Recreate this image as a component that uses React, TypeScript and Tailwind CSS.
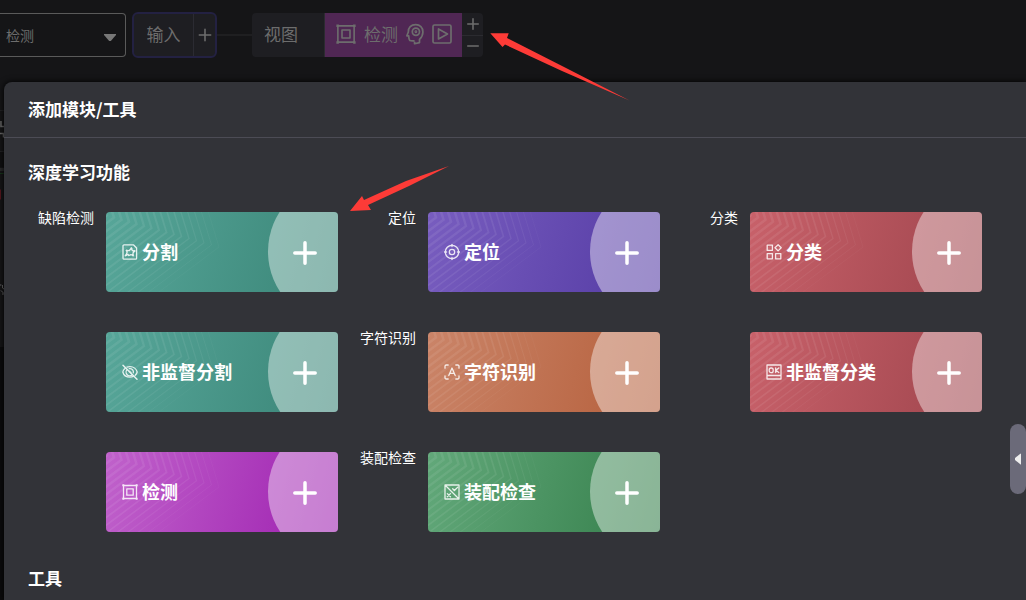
import type { ReactNode } from 'react';

type Module = { label?: string; name: string; tone: string; icon: ReactNode };

const TEAL = 'bg-linear-[105deg] from-[#57a699] to-[#3a8577]';
const VIOLET = 'bg-linear-[105deg] from-[#785dbf] to-[#543ba4]';
const RED = 'bg-linear-[105deg] from-[#c8616a] to-[#9f454d]';
const ORANGE = 'bg-linear-[105deg] from-[#ca8468] to-[#b55f3b]';
const MAGENTA = 'bg-linear-[105deg] from-[#c062cb] to-[#9e20b0]';
const GREEN = 'bg-linear-[105deg] from-[#62a87a] to-[#357f4b]';

function Glyph({ children, className = 'size-4' }: { children: ReactNode; className?: string }) {
  return (
    <svg
      viewBox="0 0 16 16"
      className={className}
      fill="none"
      stroke="currentColor"
      strokeWidth="1.3"
      strokeLinecap="round"
      strokeLinejoin="round"
      aria-hidden="true"
    >
      {children}
    </svg>
  );
}

const frameIcon = (
  <>
    <path d="M1.500 1.500h13v13h-13z" />
    <path d="M4.800 4.800h6.400v6.400H4.800z" />
    <path d="M.3.300h2v2H.3zM13.700.3h2v2h-2zM.3 13.700h2v2H.3zM13.700 13.700h2v2h-2z" fill="currentColor" stroke="none" />
  </>
);

const segmentIcon = (
  <>
    <path d="M2 .8h9.400l3.200 3.200v10.200a1 1 0 0 1-1 1H2a1 1 0 0 1-1-1V1.800a1 1 0 0 1 1-1z" />
    <path d="M4.200 10.800l.9-2.600-.5-1.700 2.500.2L9.400 4.200l.8 2.200 2.200.9-1.400 1.700.1 2.300-2.200-.7-2.300 1-.5-1.300z" />
    <path d="M3.600 11.500l1.400-.9M12.800 6.900l-1.200.4M4.500 6.400l.6.3M9.400 4l.2.8M11 11.600l-.2-.7" strokeWidth="1.700" />
  </>
);

const targetIcon = (
  <>
    <circle cx="8" cy="8" r="6.700" />
    <circle cx="8" cy="8" r="2.700" />
    <path d="M8 .4v2.200M8 13.400v2.200M.4 8h2.200M13.400 8h2.200" />
  </>
);

const classifyIcon = (
  <path d="M1.200 1.200h5.200v5.200H1.200zM1.200 9.600h5.200v5.200H1.200zM9.600 9.600h5.200v5.200H9.600zM12.100.7l3.100 3.100-3.100 3.100L9 3.800z" />
);

const eyeOffIcon = (
  <>
    <path d="M3.200 4.200C1.800 5.300 1 6.800.8 8c.8 3 3.700 5.200 7.200 5.200 1.300 0 2.500-.3 3.500-.9M5 3.200A8 8 0 0 1 8 2.600c3.600 0 6.500 2.400 7.200 5.400-.3 1.200-1 2.300-2 3.200" />
    <path d="M5.200 5.600a3.600 3.600 0 0 0 5 5.200M7.200 4.700a3.400 3.400 0 0 1 4.100 4.200M7.300 7.100l1.800 1.900" />
    <path d="M1 1.200l14 14" strokeWidth="1.500" />
  </>
);

const characterIcon = (
  <>
    <path d="M1 4.200V2.200A1.200 1.200 0 0 1 2.200 1h2M11.800 1h2A1.200 1.200 0 0 1 15 2.200v2M15 11.800v2a1.200 1.200 0 0 1-1.200 1.200h-2M4.200 15h-2A1.200 1.200 0 0 1 1 13.800v-2" />
    <path d="M4.800 11.600 8 4l3.200 7.600M5.900 9.300h4.200" />
  </>
);

const okIcon = (
  <>
    <path d="M1 1h14v14H1zM1 11.500h14" />
    <rect x="3.200" y="4" width="4" height="4.600" rx="1.900" />
    <path d="M9.700 3.900v4.700M12.800 3.900 9.900 6.300l2.900 2.300" />
  </>
);

const assemblyIcon = (
  <>
    <path d="M1 1h14v14H1zM1 1l14 14" />
    <path d="M8.700 4.800l1.700 1.700 3.400-3.400M3.300 9.600l3.200 3.200M6.500 9.600l-3.200 3.200" />
  </>
);

const modules: Module[] = [
  { label: '缺陷检测', name: '分割', tone: TEAL, icon: segmentIcon },
  { label: '定位', name: '定位', tone: VIOLET, icon: targetIcon },
  { label: '分类', name: '分类', tone: RED, icon: classifyIcon },
  { name: '非监督分割', tone: TEAL, icon: eyeOffIcon },
  { label: '字符识别', name: '字符识别', tone: ORANGE, icon: characterIcon },
  { name: '非监督分类', tone: RED, icon: okIcon },
  { name: '检测', tone: MAGENTA, icon: frameIcon },
  { label: '装配检查', name: '装配检查', tone: GREEN, icon: assemblyIcon },
];

const ripples = Array.from({ length: 19 }, (_, i) => {
  const x = 113 - i * 7.5;
  const y = 35 - i * 2.1;
  return {
    points: `${x - 11},${y - 36} ${x},${y} ${x - 140},${y + 105}`,
    width: Math.min(2.6, 0.8 + i * 0.16),
    opacity: Math.min(0.075, 0.045 + i * 0.006),
  };
});

function CardArt() {
  return (
    <svg viewBox="0 0 232 80" className="absolute inset-0 size-full" fill="none" aria-hidden="true">
      {ripples.map((r) => (
        <polyline key={r.points} points={r.points} stroke="#fff" strokeWidth={r.width} strokeOpacity={r.opacity} />
      ))}
      <circle cx="235" cy="39.500" r="73" fill="#fff" fillOpacity=".42" />
      <path d="M199 30.800v20.400M188.800 41h20.400" stroke="#fff" strokeWidth="3.500" strokeLinecap="round" />
    </svg>
  );
}

function ModuleCell({ label, name, tone, icon }: Module) {
  return (
    <div className="flex items-start">
      <span className="flex-1 pr-3 text-right text-sm leading-2.5">{label}</span>
      <button
        type="button"
        className={`relative flex h-20 w-[232px] items-center overflow-hidden rounded-sm pl-4 text-left ${tone}`}
      >
        <CardArt />
        <span className="relative flex items-center gap-1">
          <Glyph className="size-4 opacity-85">{icon}</Glyph>
          <span className="pb-0.5 text-lg leading-6 font-bold">{name}</span>
        </span>
      </button>
    </div>
  );
}

function TopBar() {
  return (
    <header className="flex h-[82px] items-start bg-[#151517] pt-3 text-[17px] text-[#6d6d6d]">
      <div className="relative mt-px mr-1.5">
        <select
          aria-label="模块"
          className="h-11 w-[126px] appearance-none rounded-r-sm border border-l-0 border-[#5a5a5a] bg-transparent pl-1.5 text-sm"
        >
          <option>检测</option>
        </select>
        <svg viewBox="0 0 12 7" className="pointer-events-none absolute top-[21px] right-2.5 w-3" fill="#777" aria-hidden="true">
          <path d="M0 0h12v1L6.800 7H5.200L0 1z" />
        </svg>
      </div>
      <div className="flex h-[46px] overflow-hidden rounded-md border-2 border-[#232142] bg-[#1e1e22]">
        <button type="button" className="w-[60px] border-r border-[#2b2b32] pb-0.5">输入</button>
        <button type="button" aria-label="添加输入" className="flex w-[21px] items-center justify-center">
          <Glyph className="size-3.5"><path d="M8 1.500v13M1.500 8h13" strokeWidth="1.800" /></Glyph>
        </button>
      </div>
      <div className="mt-[22px] h-0.5 w-[35px] bg-[#1f1f21]" />
      <div className="mt-px flex h-11 overflow-hidden rounded-sm bg-[#1e1e22]">
        <button type="button" className="w-[73px] border-r border-[#2b2b30] pb-0.5 pl-3 text-left">视图</button>
        <button type="button" className="flex w-[137px] items-center gap-2 bg-[#502754] pb-0.5 pl-[11px]">
          <Glyph className="size-5">{frameIcon}</Glyph>
          <span>检测</span>
          <svg viewBox="0 0 20 24" className="h-[22px] w-[18px]" fill="none" stroke="currentColor" strokeWidth="1.900" strokeLinejoin="round" aria-hidden="true">
            <path d="M9.500 20.500v2.300l5.500-1.300v-3.500c2-2 3.800-4.500 3.800-8.300C18.800 5 15.500 1.500 10.800 1.500 5.500 1.500 2.500 4.800 2.600 9.800L1 14h2c0 2.500.2 4 1.200 5.200 1.200.6 3.300.4 5.300.4" />
            <circle cx="11" cy="9.500" r="4" />
            <circle cx="11" cy="9.500" r=".6" />
          </svg>
          <svg viewBox="0 0 20 20" className="size-5" fill="none" stroke="currentColor" strokeWidth="1.700" strokeLinejoin="round" aria-hidden="true">
            <rect x="1" y="1" width="18" height="18" rx="1.500" />
            <path d="M6.500 5v10l9-5z" />
          </svg>
        </button>
        <div className="flex w-[21px] flex-col">
          <button type="button" aria-label="添加" className="flex flex-1 items-center justify-center border-b border-[#2b2b30]">
            <Glyph className="size-3.5"><path d="M8 2v12M2 8h12" strokeWidth="1.800" /></Glyph>
          </button>
          <button type="button" aria-label="移除" className="flex flex-1 items-center justify-center">
            <Glyph className="size-3.5"><path d="M2 8h12" strokeWidth="1.800" /></Glyph>
          </button>
        </div>
      </div>
    </header>
  );
}

function Backdrop() {
  return (
    <svg viewBox="0 0 12 518" className="absolute top-0 left-0 w-3" fill="none" aria-hidden="true">
      <path d="M0 0h12v265H0z" fill="#151517" />
      <path d="M0 265h12v253H0z" fill="#0b0b0c" />
      <path d="M0 28.500h12M0 69.500h12" stroke="#222224" />
      <path d="M0 70h12v15H0z" fill="#101011" />
      <path d="M0 87.500h12" stroke="#2a2a2b" strokeWidth="3" />
      <path d="M0 91.500h4" stroke="#17371b" />
      <path d="M0 107.500h1v10H0z" fill="#57171e" />
      <path d="M1 39v5.500h3M0 51.500h3.500v4" stroke="#6c6c6c" strokeWidth="1.500" />
      <path d="M2.500 203v3l1.500 1M1 208.500l3 3M0 203h1.500M2 212h2" stroke="#6a6a6a" />
    </svg>
  );
}

function Callouts() {
  return (
    <svg viewBox="0 0 290 190" className="pointer-events-none absolute top-[30px] left-[345px] w-[290px]" fill="#fd3b37" aria-hidden="true">
      <path d="M145.300 3.300h18.400L162 8l60 30.500 62.500 32L217 41l-57-26.500-2.500 2.500z" />
      <path d="M5 181l12-15 2 4 42-19 43-15-40 20-41 19 3 5z" />
    </svg>
  );
}

export default function App() {
  return (
    <div className="relative flex min-h-screen flex-col overflow-hidden bg-[#151517] font-['Noto_Sans_CJK_SC',sans-serif] text-white">
      <TopBar />
      <div className="relative flex flex-1">
        <Backdrop />
        <main className="relative ml-1 flex-1 rounded-tl-lg bg-[#323338] shadow-[0_0_6px_#000]">
          <h1 className="flex h-14 items-center border-b border-[#4c4c55] px-6 pb-0.5 text-[17px] font-bold">添加模块/工具</h1>
          <h2 className="mt-[23px] px-6 text-[17px] leading-[22px] font-bold">深度学习功能</h2>
          <div className="mt-[29px] ml-3 grid grid-cols-[repeat(3,322px)] gap-y-10">
            {modules.map((m) => (
              <ModuleCell key={m.name} {...m} />
            ))}
          </div>
          <h2 className="mt-[35px] px-6 text-[17px] leading-[22px] font-bold">工具</h2>
          <button
            type="button"
            aria-label="展开侧栏"
            className="absolute top-[342px] right-0 flex h-[70px] w-4 items-center justify-center rounded-full bg-[#6b6a79]"
          >
            <svg viewBox="0 0 6 12" className="h-3 w-1.5" fill="#eee" aria-hidden="true">
              <path d="M6 1v10q0 1-1 0L0 7V5l5-4q1-1 1 0z" />
            </svg>
          </button>
        </main>
      </div>
      <Callouts />
    </div>
  );
}
